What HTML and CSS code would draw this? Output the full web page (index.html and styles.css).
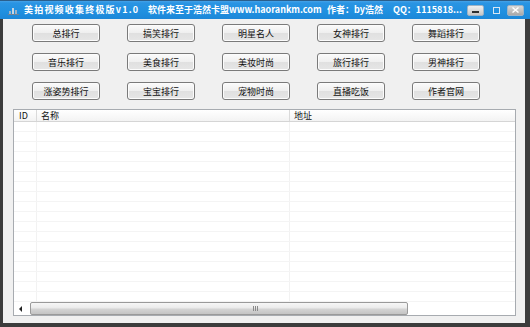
FILE: index.html
```html
<!DOCTYPE html>
<html>
<head>
<meta charset="utf-8">
<link rel="stylesheet" href="styles.css">
</head>
<body>
<div class="window">
  <div class="titlebar">
    <svg class="appicon" width="12" height="10" viewBox="0 0 12 10">
      <rect x="1" y="6" width="2" height="3" fill="#9fb3c6"/>
      <rect x="4" y="3" width="2" height="6" fill="#c9d6e2"/>
      <rect x="7" y="5" width="2" height="4" fill="#9fb3c6"/>
      <rect x="0" y="9" width="11" height="1" fill="#6f8396"/>
    </svg>
    <div class="ttext">
      <span class="t1">美拍视频收集终极版v1.0</span><span class="t2">软件来至于浩然卡盟www.haorankm.com</span><span class="t3">作者：by浩然</span><span class="t4">QQ：1115818...</span>
    </div>
    <div class="wbtn minb"><span class="minbar"></span></div>
    <div class="maxb"></div>
    <div class="wbtn closeb">
      <svg width="7" height="6" viewBox="0 0 7 6"><path d="M0.5 0.5 L6.5 5.5 M6.5 0.5 L0.5 5.5" stroke="#ffffff" stroke-width="1.4"/></svg>
    </div>
  </div>
  <div class="frame">
    <div class="client">
      <div class="buttons">
        <div class="btn">总排行</div>
        <div class="btn">搞笑排行</div>
        <div class="btn">明星名人</div>
        <div class="btn">女神排行</div>
        <div class="btn">舞蹈排行</div>
        <div class="btn">音乐排行</div>
        <div class="btn">美食排行</div>
        <div class="btn">美妆时尚</div>
        <div class="btn">旅行排行</div>
        <div class="btn">男神排行</div>
        <div class="btn">涨姿势排行</div>
        <div class="btn">宝宝排行</div>
        <div class="btn">宠物时尚</div>
        <div class="btn">直播吃饭</div>
        <div class="btn">作者官网</div>
      </div>
      <div class="list">
        <div class="header">
          <div class="hc c1">ID</div>
          <div class="hc c2">名称</div>
          <div class="hc c3">地址</div>
        </div>
        <div class="rows">
          <div class="row"><div class="c1"></div><div class="c2"></div><div class="c3"></div></div>
          <div class="row"><div class="c1"></div><div class="c2"></div><div class="c3"></div></div>
          <div class="row"><div class="c1"></div><div class="c2"></div><div class="c3"></div></div>
          <div class="row"><div class="c1"></div><div class="c2"></div><div class="c3"></div></div>
          <div class="row"><div class="c1"></div><div class="c2"></div><div class="c3"></div></div>
          <div class="row"><div class="c1"></div><div class="c2"></div><div class="c3"></div></div>
          <div class="row"><div class="c1"></div><div class="c2"></div><div class="c3"></div></div>
          <div class="row"><div class="c1"></div><div class="c2"></div><div class="c3"></div></div>
          <div class="row"><div class="c1"></div><div class="c2"></div><div class="c3"></div></div>
          <div class="row"><div class="c1"></div><div class="c2"></div><div class="c3"></div></div>
          <div class="row"><div class="c1"></div><div class="c2"></div><div class="c3"></div></div>
          <div class="row"><div class="c1"></div><div class="c2"></div><div class="c3"></div></div>
          <div class="row"><div class="c1"></div><div class="c2"></div><div class="c3"></div></div>
          <div class="row"><div class="c1"></div><div class="c2"></div><div class="c3"></div></div>
          <div class="row"><div class="c1"></div><div class="c2"></div><div class="c3"></div></div>
          <div class="row"><div class="c1"></div><div class="c2"></div><div class="c3"></div></div>
          <div class="row"><div class="c1"></div><div class="c2"></div><div class="c3"></div></div>
          <div class="row"><div class="c1"></div><div class="c2"></div><div class="c3"></div></div>
        </div>
        <div class="hscroll">
          <div class="arrow"><span class="tri"></span></div>
          <div class="thumb"><span class="grip"></span></div>
          <div class="track"></div>
        </div>
      </div>
    </div>
  </div>
</div>
</body>
</html>
```
FILE: styles.css
```css
* { box-sizing: border-box; }
html, body { margin: 0; padding: 0; background: #3a3a3a; }
body { font-family: "Noto Sans CJK SC", "DejaVu Sans", sans-serif; }
.window {
  width: 530px; height: 327px;
  display: flex; flex-direction: column;
  background: #3c3c3c;
  overflow: hidden;
}
.titlebar {
  height: 19px; flex: none;
  display: flex; align-items: center;
  background: linear-gradient(#45a3e9 0, #2a94e3 2px, #2090e0 60%, #1c87d8 100%);
  border-top: 1px solid #2b5f8c;
}
.appicon { margin-left: 8px; margin-right: 4px; flex: none; }
.ttext {
  display: flex; color: #fff; font-weight: bold; font-size: 9px;
  white-space: nowrap; line-height: 12px; width: 442px;
}
.t1 { width: 124px; flex: none; letter-spacing: 1.2px; }
.t2 { width: 179px; flex: none; }
.t3 { width: 66px; flex: none; }
.t4 { flex: none; }
.wbtn {
  width: 17px; height: 11px; flex: none;
  border: 1px solid #9db3c6; border-radius: 2px;
  background: linear-gradient(#f0f0f0, #c6c6c6);
  display: flex; align-items: center; justify-content: center;
}
.minb { margin-left: 1px; align-items: flex-end; padding-bottom: 2px; }
.minbar { width: 7px; height: 2px; background: #2f2f2f; display: block; }
.maxb {
  width: 7px; height: 7px; margin-left: 9px; margin-right: 7px; flex: none;
  border: 1px solid #d8e6f2;
}
.closeb { background: linear-gradient(#d8d8d8, #a8a8a8); }
.frame {
  flex: 1; display: flex;
  padding: 0 5px 4px 3px;
}
.client {
  flex: 1; background: #f0f0f0;
  display: flex; flex-direction: column;
  padding-top: 5px;
}
.buttons {
  display: grid;
  grid-template-columns: repeat(5, 68px);
  column-gap: 27px; row-gap: 11px;
  margin-left: 29px;
}
.btn {
  height: 18px;
  border: 1px solid #7a7a7a; border-radius: 3px;
  background: linear-gradient(#fbfbfb 0, #efefef 50%, #e0e0e0 51%, #e6e6e6 100%);
  box-shadow: inset 0 0 0 1px #fcfcfc;
  display: flex; align-items: center; justify-content: center;
  font-size: 9px; color: #111; line-height: 1;
}
.list {
  flex: 1;
  margin: 9px 9px 7px 10px;
  border: 1px solid #a7abb0;
  background: #fff;
  display: flex; flex-direction: column;
}
.header {
  height: 12px; flex: none; display: flex;
  background: linear-gradient(#ffffff, #f3f3f3);
  border-bottom: 1px solid #d5d5d5;
  font-size: 9px; line-height: 11px; color: #111;
}
.hc { padding-left: 4px; }
.header .c1 { border-right: 1px solid #dadada; padding-left: 5px; }
.header .c2 { border-right: 1px solid #dadada; }
.c1 { width: 23px; flex: none; }
.c2 { width: 253px; flex: none; }
.c3 { flex: 1; }
.rows { flex: 1; overflow: hidden; }
.row { height: 10px; display: flex; border-bottom: 1px solid #f4f4f4; }
.row .c1, .row .c2 { border-right: 1px solid #f2f2f2; }
.hscroll { height: 13px; flex: none; display: flex; }
.arrow { width: 16px; display: flex; align-items: center; padding-left: 5px; }
.tri {
  width: 0; height: 0; display: block;
  border-top: 3px solid transparent; border-bottom: 3px solid transparent;
  border-right: 3px solid #222;
}
.thumb {
  width: 378px;
  border: 1px solid #9a9a9a; border-radius: 2px;
  background: linear-gradient(#f7f7f7 0, #ededed 40%, #d2d2d2 60%, #c4c4c4 100%);
  display: flex; align-items: center; justify-content: flex-end; padding-right: 148px;
}
.grip {
  width: 6px; height: 5px; display: block;
  background: repeating-linear-gradient(90deg, #8a8a8a 0 1px, transparent 1px 2px);
}
.track { flex: 1; background: #fff; }
```
